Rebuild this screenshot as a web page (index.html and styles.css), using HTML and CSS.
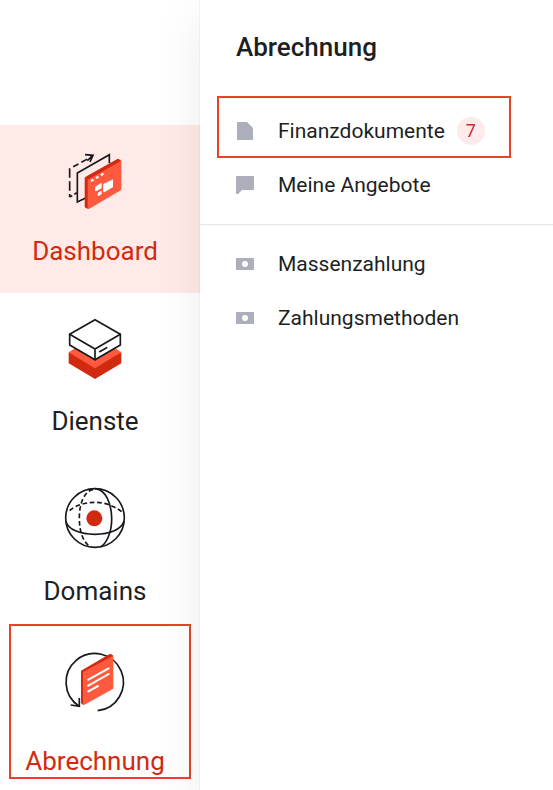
FILE: index.html
```html
<!DOCTYPE html>
<html lang="de">
<head>
<meta charset="utf-8">
<meta name="viewport" content="width=device-width, initial-scale=1">
<title>Abrechnung</title>
<link rel="stylesheet" href="styles.css">
</head>
<body>
<div class="app">
  <nav class="sidebar" aria-label="Hauptnavigation">
    <a class="nav-item nav-item--active" href="#dashboard">
      <svg class="nav-icon" viewBox="0 0 240 240" aria-hidden="true">
        <g fill="none" stroke="#16181d" stroke-width="5">
          <path d="M44 171V86L114 48" stroke-dasharray="9 10 28 11 28 11 18 10 20 11 30"/>
          <path d="M44 171L66 158" stroke-dasharray="9 7"/>
          <path d="M90 44L114 46L105 66M114 46L97 62"/>
          <path d="M92 174L67 186V99L163 44V70"/>
        </g>
        <path fill="#d22a10" d="M89 115Q89 112 92 110L187 57Q189 56 191 57L199 62L100 207L91 203Q89 202 89 199Z"/>
        <path fill="#ff5a40" d="M98 119L199 62V148Q199 150 197 151L102 207L98 205Z"/>
        <g fill="#fff">
          <path d="M106 120L114 116L117 122L109 126ZM121 111L129 107L132 113L124 117ZM136 102L144 98L147 104L139 108Z"/>
          <path d="M121 140L138 129Q141 128 140 132V145L123 154Q119 154 120 150ZM145 132L171 119Q175 118 174 122V141L148 157Q144 157 144 153ZM129 158L138 153Q141 152 140 156V162L131 168Q128 169 128 165Z"/>
        </g>
      </svg>
      <span class="nav-label">Dashboard</span>
    </a>
    <a class="nav-item" href="#dienste">
      <svg class="nav-icon" viewBox="0 0 240 240" aria-hidden="true">
        <path fill="#d22a10" d="M41 127L120 160L199 127V160L120 207L41 160Z"/>
        <path fill="#ff5a40" d="M41 127L65 112L120 140L176 112L199 127L120 175Z"/>
        <g fill="#fff" stroke="#16181d" stroke-width="5" stroke-linejoin="round" stroke-linecap="round">
          <path d="M44 73L120 29L196 73V105L120 149L44 105Z"/>
          <path fill="none" d="M44 73L120 117L196 73M120 117V149M134 125L155 113"/>
        </g>
      </svg>
      <span class="nav-label">Dienste</span>
    </a>
    <a class="nav-item" href="#domains">
      <svg class="nav-icon" viewBox="0 0 240 240" aria-hidden="true">
        <g fill="none" stroke="#16181d" stroke-width="5">
          <circle cx="120" cy="114" r="88"/>
          <path d="M120 26C152 29 169 69 170 114S152 194 136 201"/>
          <path d="M33 124C39 148 74 163 120 163S199 148 207 124"/>
          <path d="M44 92C61 76 90 67 120 67S179 78 205 99" stroke-dasharray="14 8"/>
          <path d="M114 28C88 34 73 71 73 112S82 180 101 197" stroke-dasharray="14 8"/>
        </g>
        <circle cx="118" cy="115" r="24" fill="#d22a10"/>
      </svg>
      <span class="nav-label">Domains</span>
    </a>
    <a class="nav-item nav-item--current nav-item--marked" href="#abrechnung">
      <svg class="nav-icon" viewBox="-1 30 240 240" aria-hidden="true">
        <g fill="none" stroke="#16181d" stroke-width="5">
          <path d="M72 199A86 86 0 1 1 127 212"/>
          <path d="M46 195L72 199V174"/>
        </g>
        <path fill="#d22a10" d="M77 92L163 42Q166 41 168 43L174 47L84 195L77 190Z"/>
        <path fill="#ff5a40" d="M83 96L174 47V146L86 195L83 193Z"/>
        <path fill="none" stroke="#fff" stroke-width="6" stroke-linecap="round" d="M99 119L160 85M99 137L160 102M99 154L128 138"/>
      </svg>
      <span class="nav-label">Abrechnung</span>
    </a>
  </nav>

  <main class="panel">
    <h1 class="panel-title">Abrechnung</h1>
    <ul class="menu">
      <li>
        <a class="menu-item menu-item--marked" href="#finanzdokumente">
          <svg class="menu-icon" viewBox="0 0 18 18" aria-hidden="true"><path fill="#acaebb" d="M2 0H11L17 6V17Q17 18 16 18H2Q1 18 1 17V1Q1 0 2 0Z"/></svg>
          <span>Finanzdokumente</span>
          <span class="badge">7</span>
        </a>
      </li>
      <li>
        <a class="menu-item" href="#angebote">
          <svg class="menu-icon" viewBox="0 0 18 18" aria-hidden="true"><path fill="#acaebb" d="M1 0H17Q18 0 18 1V13Q18 14 17 14H6L2 18H0V1Q0 0 1 0Z"/></svg>
          <span>Meine Angebote</span>
        </a>
      </li>
    </ul>
    <ul class="menu menu--divided">
      <li>
        <a class="menu-item" href="#massenzahlung">
          <svg class="menu-icon" viewBox="0 0 18 18" aria-hidden="true"><rect y="3" width="18" height="12" fill="#acaebb"/><circle cx="9" cy="9" r="3" fill="#fff"/></svg>
          <span>Massenzahlung</span>
        </a>
      </li>
      <li>
        <a class="menu-item" href="#zahlungsmethoden">
          <svg class="menu-icon" viewBox="0 0 18 18" aria-hidden="true"><rect y="3" width="18" height="12" fill="#acaebb"/><circle cx="9" cy="9" r="3" fill="#fff"/></svg>
          <span>Zahlungsmethoden</span>
        </a>
      </li>
    </ul>
  </main>
</div>
</body>
</html>
```
FILE: styles.css
```css
* {
  box-sizing: border-box;
}

body {
  margin: 0;
  background: #fff;
  color: #1d1f24;
  font-family: Roboto, "Liberation Sans", sans-serif;
  font-weight: 380;
}

a {
  color: inherit;
  text-decoration: none;
}

.app {
  display: grid;
  grid-template-columns: 200px 1fr;
  min-height: 100vh;
  overflow: hidden;
}

.sidebar {
  display: flex;
  flex-direction: column;
  gap: 2px;
  padding-top: 125px;
}

.nav-item {
  position: relative;
  display: flex;
  flex-direction: column;
  align-items: center;
  gap: 14px;
  padding: 15px 10px 25px 0;
}

.nav-item:last-child {
  padding-bottom: 12px;
}

.nav-item--active {
  background: #ffeae7;
}

.nav-item--active,
.nav-item--current {
  color: #d22a10;
}

.nav-icon {
  width: 80px;
  height: 80px;
}

.nav-label {
  font-size: 26px;
  line-height: 34px;
}

.nav-item--marked::after,
.menu-item--marked::after {
  content: "";
  position: absolute;
  border: 2px solid #e8432a;
  pointer-events: none;
}

.nav-item--marked::after {
  inset: -11px 9px 11px;
}

.panel {
  position: relative;
  background: #fff;
  box-shadow: 0 0 1px rgba(0, 0, 0, 0.2), 0 16px 48px rgba(0, 0, 0, 0.08);
  padding-top: 30px;
}

.panel-title {
  margin: 0 0 40px;
  padding: 0 36px;
  font-size: 26px;
  font-weight: 480;
  line-height: 34px;
}

.menu {
  margin: 0;
  padding: 0 0 12px;
  list-style: none;
}

.menu--divided {
  border-top: 1px solid #e5e5e8;
  padding-top: 12px;
}

.menu-item {
  position: relative;
  display: flex;
  align-items: center;
  height: 54px;
  padding: 0 36px;
  font-size: 21px;
}

.menu-item--marked::after {
  inset: -8px 42px 0 17px;
}

.menu-icon {
  width: 18px;
  height: 18px;
  margin-right: 24px;
}

.badge {
  width: 28px;
  height: 28px;
  margin-left: 12px;
  border-radius: 50%;
  background: #fdebec;
  color: #c22a3c;
  font-size: 18px;
  line-height: 28px;
  text-align: center;
}
```
